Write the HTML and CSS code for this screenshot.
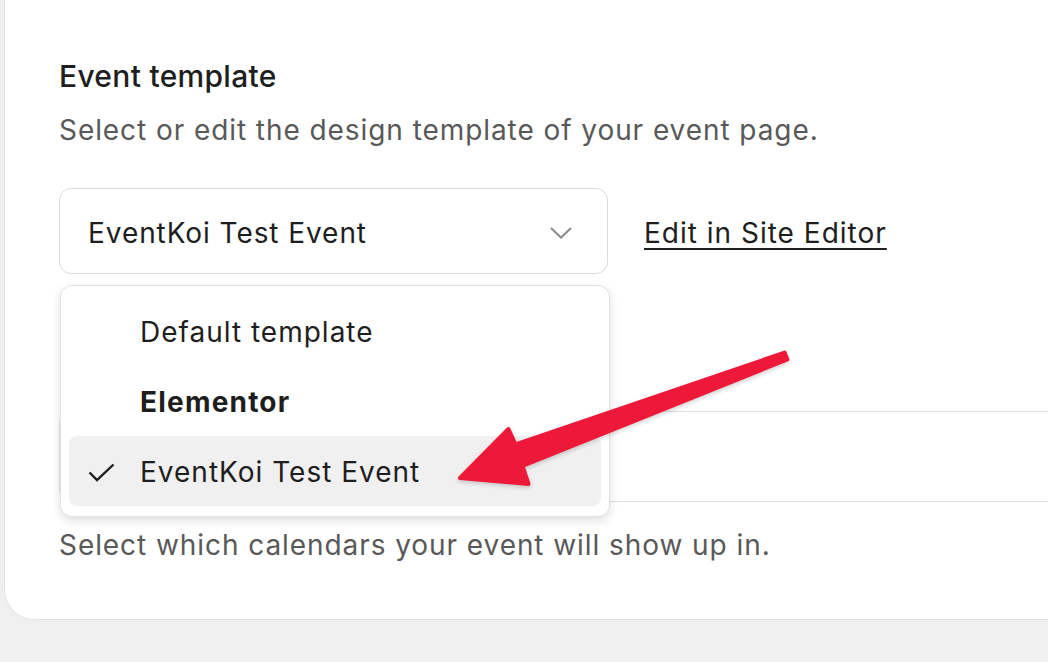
FILE: index.html
```html
<!DOCTYPE html>
<html lang="en">
<head>
<meta charset="utf-8">
<title>Event template</title>
<link rel="stylesheet" href="styles.css">
</head>
<body>
<div class="card">
  <h2 class="field-title">Event template</h2>
  <p class="field-desc">Select or edit the design template of your event page.</p>
  <div class="row">
    <div class="select-wrap">
      <div class="select">
        <span class="select-value">EventKoi Test Event</span>
        <svg class="chevron" width="22" height="12" viewBox="0 0 22 12"><path d="M1 1 L11 10.5 L21 1" fill="none" stroke="#8a8a8a" stroke-width="2"/></svg>
      </div>
      <div class="dropdown">
        <div class="item"><span class="check"></span><span>Default template</span></div>
        <div class="item bold"><span class="check"></span><span>Elementor</span></div>
        <div class="item selected"><span class="check"><svg width="27" height="19" viewBox="0 0 27 19"><path d="M1.5 9.5 L9 17 L25.5 1.5" fill="none" stroke="#1e1e1e" stroke-width="2.4"/></svg></span><span>EventKoi Test Event</span></div>
      </div>
    </div>
    <a class="link" href="#">Edit in Site Editor</a>
  </div>
  <div class="cal-box"></div>
  <p class="field-desc help">Select which calendars your event will show up in.</p>
</div>
<svg class="annotation" width="1048" height="662" viewBox="0 0 1048 662">
  <path d="M784.6 352.6 L515.5 444.5 L508.5 429 L460 478 L528.5 484 L522.5 466 L787.4 359.4 Z" fill="#ee1838" stroke="#ee1838" stroke-width="4" stroke-linejoin="round"/>
</svg>
</body>
</html>
```

FILE: styles.css
```css
html, body {
  margin: 0;
  padding: 0;
}
body {
  background: #f0f0f0;
  width: 1048px;
  height: 662px;
  overflow: hidden;
  position: relative;
  font-family: Inter, "Noto Sans", sans-serif;
  color: #1e1e1e;
}
.card {
  box-sizing: border-box;
  width: 1120px;
  margin-left: 4px;
  background: #fff;
  border: 1px solid #e4e4e4;
  border-top: none;
  border-radius: 0 0 30px 30px;
  padding: 58px 0 57px 54px;
}
.field-title {
  margin: 0;
  font-size: 30px;
  line-height: 36px;
  font-weight: 500;
  letter-spacing: 0.3px;
  color: #1e1e1e;
}
.field-desc {
  margin: 19px 0 0;
  font-size: 28px;
  line-height: 34px;
  letter-spacing: 0.93px;
  color: #595959;
}
.row {
  margin-top: 41px;
  display: flex;
  align-items: center;
  gap: 36px;
}
.select-wrap {
  position: relative;
  width: 549px;
}
.select {
  box-sizing: border-box;
  height: 86px;
  border: 1px solid #dcdcdc;
  border-radius: 12px;
  padding: 3px 35px 0 28px;
  display: flex;
  align-items: center;
  justify-content: space-between;
  font-size: 28px;
  letter-spacing: 0.93px;
}
.chevron {
  display: block;
}
.dropdown {
  position: absolute;
  top: 97px;
  left: 1px;
  width: 550px;
  box-sizing: border-box;
  background: #fff;
  border: 1px solid #e2e2e2;
  border-radius: 12px;
  box-shadow: 0 4px 10px rgba(0, 0, 0, 0.12);
  padding: 10px 8px;
  z-index: 2;
}
.item {
  height: 70px;
  display: flex;
  align-items: center;
  padding-left: 19px;
  padding-top: 2px;
  box-sizing: border-box;
  font-size: 28px;
  letter-spacing: 1px;
  color: #1e1e1e;
  border-radius: 8px;
}
.item.bold {
  font-weight: 700;
  letter-spacing: 1.2px;
}
.item.selected {
  background: #f0f0f0;
}
.check {
  width: 27px;
  height: 19px;
  margin-right: 25px;
  display: flex;
}
.link {
  font-size: 28px;
  letter-spacing: 1px;
  color: #1e1e1e;
  text-decoration: underline;
  text-decoration-thickness: 2px;
  text-underline-offset: 5px;
  padding-top: 3px;
}
.cal-box {
  box-sizing: border-box;
  margin-top: 137px;
  height: 91px;
  border: 1px solid #e0e0e0;
  border-radius: 12px;
}
.help {
  margin-top: 26px;
}
.annotation {
  position: absolute;
  top: 0;
  left: 0;
  z-index: 10;
  pointer-events: none;
  filter: drop-shadow(0 2px 2px rgba(0, 0, 0, 0.18));
}
```
